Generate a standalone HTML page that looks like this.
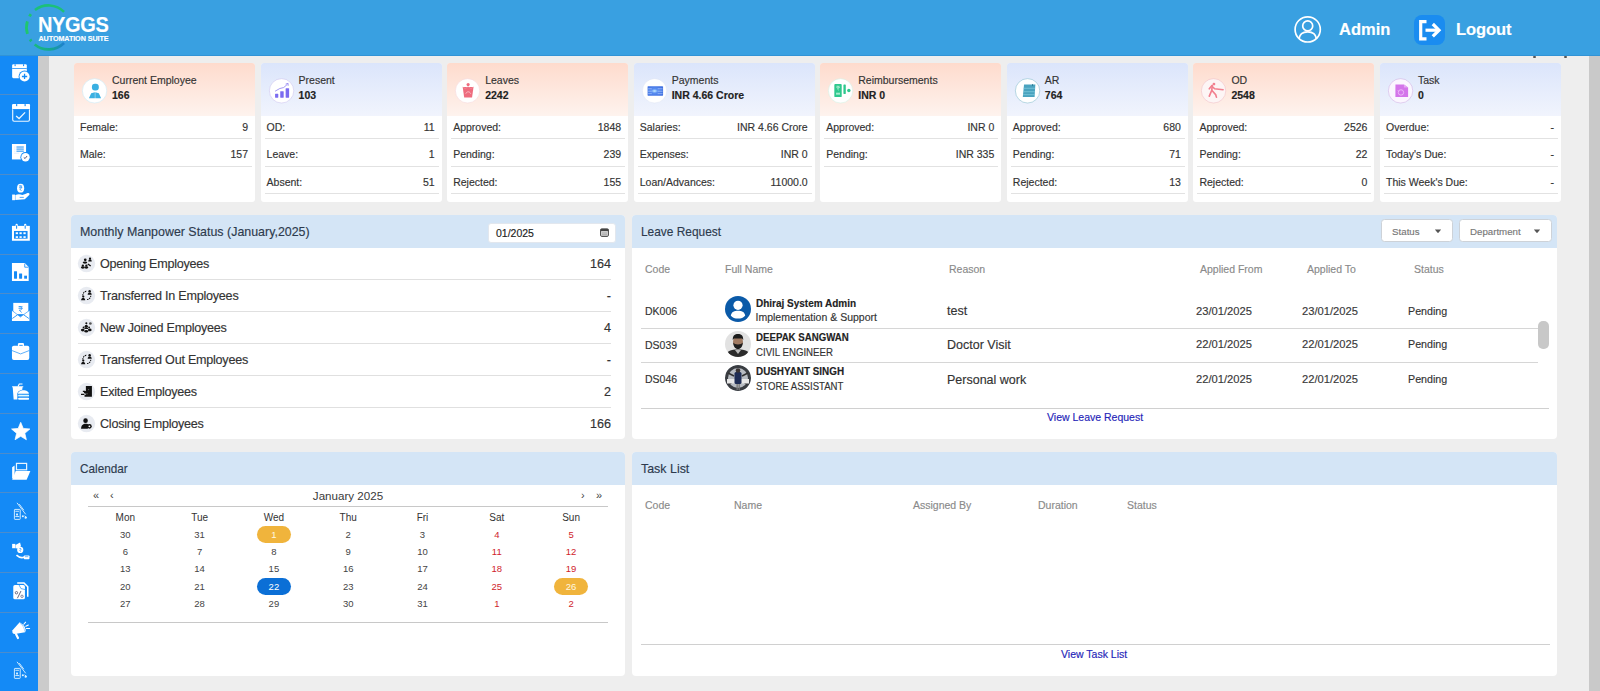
<!DOCTYPE html><html><head><meta charset="utf-8"><style>
*{box-sizing:border-box;margin:0;padding:0}
html,body{width:1600px;height:691px;overflow:hidden}
body{font-family:"Liberation Sans",sans-serif;background:#eeeeee;color:#333;position:relative}
.a{position:absolute;white-space:nowrap}
body{-webkit-text-stroke:0.15px currentColor}
#hdr{left:0;top:0;width:1600px;height:56px;background:#39a0e1;z-index:2;border-bottom:1px solid #3193d6}
#side{left:0;top:55px;width:38px;height:636px;background:#148af6;overflow:hidden}
#strip{left:38px;top:55px;width:11px;height:636px;background:#cbcbcb}
#vscroll{left:1589px;top:55px;width:11px;height:636px;background:#c9c9c9}
.sdiv{position:absolute;left:0;width:38px;height:1px;background:#4b8ccc}
.sic{position:absolute;left:10.5px;width:20px;height:20px}
.card{position:absolute;top:62.8px;width:181px;height:138.9px;background:#fff;border-radius:3px;overflow:hidden}
.card .top{position:absolute;left:0;top:0;width:100%;height:53px}
.peach .top{background:linear-gradient(#fedbcd,#fef3ee)}
.blue .top{background:linear-gradient(#dbe5fb,#f1f4fd)}
.card .ic{position:absolute;left:8px;top:15.3px;width:25px;height:25px;border-radius:50%;background:#fff;border:1px solid #ddd}
.card .ic svg{position:absolute;left:3px;top:3px}
.card .lbl{position:absolute;left:38px;top:11px;font-size:10.5px;color:#333;white-space:nowrap}
.card .val{position:absolute;left:38px;top:26px;font-size:10.5px;font-weight:bold;color:#222;white-space:nowrap}
.card .row{position:absolute;left:4px;width:174px;height:27.5px;border-bottom:1px solid #e2e2e2;font-size:10.5px;color:#333}
.card .row span{position:absolute;top:9.4px;white-space:nowrap}
.card .row .l{left:2px}
.card .row .r{right:4px}
.panel{position:absolute;background:#fff;border-radius:4px;overflow:hidden}
.panel .ph{position:absolute;left:0;top:0;width:100%;height:33px;background:#d4e5f6}
.panel .pt{position:absolute;left:8.8px;top:8.9px;font-size:13.3px;color:#2d3a4d;white-space:nowrap;transform-origin:0 0}
</style></head><body>
<div id="hdr" class="a">
<svg class="a" style="left:0;top:0" width="130" height="56" viewBox="0 0 130 56"><defs><linearGradient id="lg" x1="0" y1="0" x2="1" y2="0"><stop offset="0" stop-color="#19b97e"/><stop offset="0.55" stop-color="#14a88e"/><stop offset="1" stop-color="#1f7fd0"/></linearGradient></defs><path d="M64.06 11.84 A22 22 0 0 0 34.96 10.06" fill="none" stroke="#1cc078" stroke-width="2.6"/><path d="M30.93 14.16 A22 22 0 0 0 29.45 16.40" fill="none" stroke="#1fc66e" stroke-width="2.8"/><path d="M27.35 21.34 A22 22 0 0 0 27.46 33.83" fill="none" stroke="#1fc66e" stroke-width="2.8"/><path d="M31.40 41.25 A22 22 0 0 1 30.05 39.38" fill="none" stroke="#1ab880" stroke-width="2.8"/><path d="M34.65 44.50 A22 22 0 0 0 64.06 42.96" fill="none" stroke="url(#lg)" stroke-width="2.6"/></svg>
<div class="a" style="left:37.7px;top:12.5px;font-size:21.5px;font-weight:bold;color:#fff;letter-spacing:-0.4px;transform:scaleX(0.93);transform-origin:0 0">NYGGS</div>
<div class="a" style="left:38.5px;top:34px;font-size:7.2px;font-weight:bold;color:#fff;letter-spacing:-0.08px">AUTOMATION SUITE</div>
<svg class="a" style="left:1293px;top:15px" width="29" height="29" viewBox="0 0 29 29"><circle cx="14.7" cy="14.4" r="12.6" fill="none" stroke="#fff" stroke-width="1.7"/><circle cx="14.7" cy="10.9" r="5" fill="none" stroke="#fff" stroke-width="1.7"/><path d="M5.8 24 C6.5 19.5 10 16.8 14.7 16.8 C19.4 16.8 22.9 19.5 23.6 24" fill="none" stroke="#fff" stroke-width="1.7"/></svg>
<div class="a" style="left:1339px;top:20px;font-size:16.5px;font-weight:bold;color:#fff">Admin</div>
<div class="a" style="left:1413.5px;top:15px;width:31.5px;height:30px;border-radius:8px;background:#1a8cf0"></div>
<svg class="a" style="left:1413.5px;top:15px" width="32" height="30" viewBox="0 0 32 30"><path d="M12.5 6.7 H6.7 V23.9 H12.5" fill="none" stroke="#fff" stroke-width="3.2"/><path d="M11.5 15.2 H23.5" fill="none" stroke="#fff" stroke-width="3.2"/><path d="M18.8 9 L25 15.2 L18.8 21.4" fill="none" stroke="#fff" stroke-width="3.2" stroke-linejoin="miter"/></svg>
<div class="a" style="left:1456px;top:20px;font-size:16.5px;font-weight:bold;color:#fff;letter-spacing:-0.1px">Logout</div>
</div>
<div id="side" class="a">
<div class="sdiv" style="top:39.3px"></div>
<div class="sdiv" style="top:79.1px"></div>
<div class="sdiv" style="top:118.9px"></div>
<div class="sdiv" style="top:158.7px"></div>
<div class="sdiv" style="top:198.5px"></div>
<div class="sdiv" style="top:238.3px"></div>
<div class="sdiv" style="top:278.1px"></div>
<div class="sdiv" style="top:317.9px"></div>
<div class="sdiv" style="top:357.7px"></div>
<div class="sdiv" style="top:397.5px"></div>
<div class="sdiv" style="top:437.3px"></div>
<div class="sdiv" style="top:477.1px"></div>
<div class="sdiv" style="top:516.9px"></div>
<div class="sdiv" style="top:556.7px"></div>
<div class="sdiv" style="top:596.5px"></div>
<svg class="a" style="left:8px;top:7px" width="26" height="26" viewBox="0 0 691 691"><rect x="110" y="60" width="390" height="370" rx="35" fill="#fff"/><rect x="110" y="160" width="390" height="20" fill="#148af6"/><rect x="175" y="60" width="28" height="50" fill="#148af6"/><rect x="400" y="60" width="28" height="50" fill="#148af6"/><circle cx="440" cy="385" r="158" fill="#148af6"/><circle cx="440" cy="385" r="135" fill="#fff"/><path d="M440 315 V455 M370 385 H510" stroke="#148af6" stroke-width="34"/></svg>
<svg class="a" style="left:8px;top:47px" width="26" height="26" viewBox="0 0 691 691"><rect x="125" y="70" width="445" height="440" rx="35" fill="none" stroke="#eaf6ff" stroke-width="30"/><rect x="110" y="55" width="475" height="135" rx="30" fill="#fff"/><rect x="215" y="55" width="30" height="55" fill="#148af6"/><rect x="440" y="55" width="30" height="55" fill="#148af6"/><rect x="125" y="190" width="445" height="18" fill="#148af6"/><path d="M215 370 L295 440 L455 275" fill="none" stroke="#eaf6ff" stroke-width="34"/></svg>
<svg class="a" style="left:8px;top:86px" width="26" height="26" viewBox="0 0 691 691"><rect x="105" y="80" width="375" height="410" fill="#fff"/><path d="M225 160 H420 M225 215 H420 M225 270 H420" stroke="#148af6" stroke-width="26"/><path d="M160 160 H200 M160 215 H200 M160 270 H200 M160 325 H300" stroke="#cfe8ff" stroke-width="18"/><circle cx="465" cy="430" r="135" fill="#148af6"/><circle cx="465" cy="430" r="112" fill="#fff"/><path d="M420 440 L455 465 L505 400" fill="none" stroke="#557" stroke-width="26"/></svg>
<svg class="a" style="left:8px;top:126px" width="26" height="26" viewBox="0 0 691 691"><ellipse cx="335" cy="190" rx="95" ry="118" fill="#fff"/><path d="M295 130 H375 M295 170 H370 M310 130 C385 130 385 210 310 210 L360 265" fill="none" stroke="#148af6" stroke-width="18"/><rect x="110" y="360" width="75" height="150" fill="#fff"/><path d="M195 370 C260 345 330 345 380 370 L460 345 L520 320 C575 305 590 355 550 385 L445 485 L195 505 Z" fill="#fff"/><path d="M310 435 H420" stroke="#148af6" stroke-width="20"/></svg>
<svg class="a" style="left:8px;top:166px" width="26" height="26" viewBox="0 0 691 691"><rect x="105" y="130" width="475" height="395" fill="#fff"/><rect x="200" y="75" width="60" height="140" rx="30" fill="#fff"/><rect x="428" y="75" width="60" height="140" rx="30" fill="#fff"/><rect x="215" y="115" width="28" height="90" rx="14" fill="#148af6"/><rect x="443" y="115" width="28" height="90" rx="14" fill="#148af6"/><rect x="160" y="265" width="360" height="205" fill="#148af6"/><g fill="#fff"><rect x="205" y="300" width="60" height="50"/><rect x="305" y="300" width="60" height="50"/><rect x="410" y="300" width="60" height="50"/><rect x="205" y="405" width="60" height="45"/><rect x="305" y="405" width="60" height="45"/><rect x="410" y="405" width="60" height="45"/></g></svg>
<svg class="a" style="left:8px;top:206px" width="26" height="26" viewBox="0 0 691 691"><path d="M105 55 H445 L550 160 V530 H105 Z" fill="#fff"/><path d="M445 70 V165 H545" fill="none" stroke="#148af6" stroke-width="22"/><g fill="#148af6"><rect x="160" y="270" width="80" height="200" rx="12"/><rect x="295" y="330" width="80" height="140" rx="12"/><rect x="430" y="390" width="75" height="80"/></g></svg>
<svg class="a" style="left:8px;top:246px" width="26" height="26" viewBox="0 0 691 691"><rect x="140" y="50" width="400" height="300" fill="#fff"/><path d="M280 150 H385 M280 195 H385 M300 150 C395 150 395 245 300 245 L365 305" fill="none" stroke="#148af6" stroke-width="20"/><path d="M105 250 L330 420 L570 250 V530 H105 Z" fill="#fff"/><path d="M105 250 L330 425 L570 250" fill="none" stroke="#148af6" stroke-width="16"/><path d="M115 465 L250 370 M555 465 L420 370" stroke="#148af6" stroke-width="22"/></svg>
<svg class="a" style="left:8px;top:285px" width="26" height="26" viewBox="0 0 691 691"><rect x="265" y="80" width="160" height="120" rx="30" fill="#fff"/><rect x="300" y="130" width="90" height="60" fill="#148af6"/><rect x="105" y="150" width="460" height="380" rx="50" fill="#fff"/><path d="M105 280 L335 370 L565 280" fill="none" stroke="#148af6" stroke-width="18"/></svg>
<svg class="a" style="left:8px;top:325px" width="26" height="26" viewBox="0 0 691 691"><path d="M110 165 H405 V195 H385 L360 520 H150 L125 195 H110 Z" fill="#fff"/><path d="M265 170 L300 105 H385" fill="none" stroke="#fff" stroke-width="30"/><path d="M245 385 C245 215 575 215 575 385 Z" fill="#148af6"/><path d="M265 365 C265 240 555 240 555 365 Z" fill="#fff"/><rect x="250" y="375" width="320" height="90" fill="#148af6"/><rect x="270" y="395" width="290" height="45" rx="15" fill="#dffaff"/><rect x="250" y="450" width="320" height="90" fill="#148af6"/><rect x="270" y="470" width="290" height="55" rx="20" fill="#fff"/></svg>
<svg class="a" style="left:8px;top:365px" width="26" height="26" viewBox="0 0 691 691"><path d="M338,63 L406,225 L581,239 L447,354 L488,524 L338,433 L188,524 L229,354 L95,239 L270,225 Z" fill="#fff" stroke="#fff" stroke-width="20" stroke-linejoin="round"/></svg>
<svg class="a" style="left:8px;top:405px" width="26" height="26" viewBox="0 0 691 691"><rect x="225" y="90" width="270" height="170" fill="none" stroke="#eaf6ff" stroke-width="32"/><path d="M110 195 L175 145 V450 L110 500 Z" fill="#fff"/><path d="M205 290 H595 L495 525 H110 Z" fill="#fff"/></svg>
<svg class="a" style="left:8px;top:445px" width="26" height="26" viewBox="0 0 691 691"><g fill="none" stroke="#dff3ff" stroke-width="24"><rect x="170" y="250" width="155" height="265" rx="15"/><path d="M195 300 H290 M195 440 H300"/><path d="M240 75 L470 380 M300 110 L420 270"/><path d="M440 420 L500 470"/></g><g fill="#dff3ff"><rect x="215" y="360" width="50" height="50"/><circle cx="395" cy="430" r="28"/><circle cx="470" cy="470" r="30"/></g></svg>
<svg class="a" style="left:8px;top:484px" width="26" height="26" viewBox="0 0 691 691"><rect x="110" y="130" width="85" height="115" fill="#fff"/><path d="M200 160 L320 95 L345 190 L255 255 L200 245 Z" fill="#fff"/><circle cx="325" cy="290" r="82" fill="#fff"/><path d="M305 255 H350 M310 255 C360 255 360 305 310 305 L340 340" fill="none" stroke="#148af6" stroke-width="14"/><path d="M225 430 C300 495 380 510 440 475" fill="none" stroke="#fff" stroke-width="45"/><rect x="420" y="440" width="150" height="100" rx="20" fill="#fff"/><path d="M450 470 H540" stroke="#148af6" stroke-width="16"/></svg>
<svg class="a" style="left:8px;top:524px" width="26" height="26" viewBox="0 0 691 691"><path d="M245 105 H425 L525 205 V470" fill="none" stroke="#fff" stroke-width="40"/><rect x="140" y="160" width="310" height="380" rx="45" fill="#fff"/><path d="M295 160 L345 255 L455 280" fill="none" stroke="#148af6" stroke-width="18"/><path d="M250 510 L345 320" stroke="#335" stroke-width="20"/><circle cx="225" cy="365" r="32" fill="none" stroke="#335" stroke-width="18"/><circle cx="372" cy="460" r="32" fill="none" stroke="#557" stroke-width="18"/></svg>
<svg class="a" style="left:8px;top:564px" width="26" height="26" viewBox="0 0 691 691"><path d="M120 300 Q95 395 185 400 L455 355 Q520 215 310 85 Z" fill="#fff"/><path d="M315 110 Q435 190 445 335" fill="none" stroke="#9fd0ff" stroke-width="22"/><path d="M215 405 L265 505" stroke="#fff" stroke-width="58" stroke-linecap="round"/><path d="M420 140 L468 85 M475 195 L540 160 M490 250 L575 250" stroke="#fff" stroke-width="28" stroke-linecap="round"/></svg>
<svg class="a" style="left:8px;top:604px" width="26" height="26" viewBox="0 0 691 691"><g fill="none" stroke="#dff3ff" stroke-width="24"><rect x="170" y="250" width="155" height="265" rx="15"/><path d="M195 300 H290 M195 440 H300"/><path d="M240 75 L470 380 M300 110 L420 270"/><path d="M440 420 L500 470"/></g><g fill="#dff3ff"><rect x="215" y="360" width="50" height="50"/><circle cx="395" cy="430" r="28"/><circle cx="470" cy="470" r="30"/></g></svg>
</div><div id="strip" class="a"></div><div id="vscroll" class="a"></div>
<div class="card peach" style="left:74.00px;width:181px">
<div class="top"></div><svg class="a" style="left:4.00px;top:11.5px" width="36" height="34" viewBox="0 0 732 691"><circle cx="337" cy="342" r="248" fill="#fff" stroke="#d2ecf6" stroke-width="14"/><rect x="283" y="198" width="140" height="135" rx="60" fill="#3ab0e2"/><path d="M222 492 L268 392 L343 372 V492 Z M470 492 L424 392 L351 372 V492 Z" fill="#3ab0e2"/></svg>
<div class="lbl">Current Employee</div><div class="val">166</div>
<div class="row" style="top:48.8px"><span class="l">Female:</span><span class="r">9</span></div>
<div class="row" style="top:76.3px"><span class="l">Male:</span><span class="r">157</span></div>
</div>
<div class="card blue" style="left:260.57px;width:181px">
<div class="top"></div><svg class="a" style="left:4.00px;top:11.5px" width="36" height="34" viewBox="0 0 732 691"><circle cx="337" cy="342" r="248" fill="#fff" stroke="#cdc6f0" stroke-width="12"/><g fill="#7b6cf0"><rect x="205" y="400" width="65" height="82" rx="8"/><rect x="310" y="352" width="70" height="130" rx="8"/><rect x="420" y="290" width="70" height="192" rx="8"/></g><path d="M205 350 L300 295 L380 275 L455 210" fill="none" stroke="#8a7cf0" stroke-width="16"/><path d="M420 205 L470 190 L470 240" fill="none" stroke="#8a7cf0" stroke-width="16"/></svg>
<div class="lbl">Present</div><div class="val">103</div>
<div class="row" style="top:48.8px"><span class="l">OD:</span><span class="r">11</span></div>
<div class="row" style="top:76.3px"><span class="l">Leave:</span><span class="r">1</span></div>
<div class="row" style="top:103.8px"><span class="l">Absent:</span><span class="r">51</span></div>
</div>
<div class="card peach" style="left:447.14px;width:181px">
<div class="top"></div><svg class="a" style="left:4.00px;top:11.5px" width="36" height="34" viewBox="0 0 732 691"><circle cx="337" cy="342" r="248" fill="#fff" stroke="#f6d8dc" stroke-width="12"/><path d="M238 262 L458 262 L428 478 H268 Z" fill="#ee6c7e"/><circle cx="348" cy="215" r="32" fill="#ee6c7e"/><path d="M238 262 L290 300 L348 255 L405 300 L458 262" fill="none" stroke="#f49aa8" stroke-width="10"/><path d="M300 400 C320 350 380 350 400 400" fill="none" stroke="#fbd0d8" stroke-width="16"/></svg>
<div class="lbl">Leaves</div><div class="val">2242</div>
<div class="row" style="top:48.8px"><span class="l">Approved:</span><span class="r">1848</span></div>
<div class="row" style="top:76.3px"><span class="l">Pending:</span><span class="r">239</span></div>
<div class="row" style="top:103.8px"><span class="l">Rejected:</span><span class="r">155</span></div>
</div>
<div class="card blue" style="left:633.71px;width:181px">
<div class="top"></div><svg class="a" style="left:4.00px;top:11.5px" width="36" height="34" viewBox="0 0 732 691"><circle cx="337" cy="342" r="248" fill="#fff" stroke="#dde3f2" stroke-width="10"/><defs><radialGradient id="pg" cx="0.45" cy="0.5" r="0.6"><stop offset="0" stop-color="#c8f0ff"/><stop offset="0.35" stop-color="#5b8ff2"/><stop offset="1" stop-color="#3f6fe0"/></radialGradient></defs><rect x="195" y="248" width="315" height="195" rx="10" fill="url(#pg)"/><path d="M205 300 H280 M205 350 H280 M205 400 H280 M400 300 H500 M400 350 H500 M400 400 H500" stroke="#bcd4ff" stroke-width="12"/></svg>
<div class="lbl">Payments</div><div class="val">INR 4.66 Crore</div>
<div class="row" style="top:48.8px"><span class="l">Salaries:</span><span class="r">INR 4.66 Crore</span></div>
<div class="row" style="top:76.3px"><span class="l">Expenses:</span><span class="r">INR 0</span></div>
<div class="row" style="top:103.8px"><span class="l">Loan/Advances:</span><span class="r">11000.0</span></div>
</div>
<div class="card peach" style="left:820.28px;width:181px">
<div class="top"></div><svg class="a" style="left:4.00px;top:11.5px" width="36" height="34" viewBox="0 0 732 691"><circle cx="337" cy="342" r="248" fill="#fff" stroke="#d4f2e4" stroke-width="12"/><rect x="210" y="205" width="150" height="265" rx="18" fill="#2ec88e"/><path d="M250 250 H320 M250 275 H320 M270 250 C320 250 320 300 270 300 L305 335" fill="none" stroke="#c8f5e0" stroke-width="12"/><rect x="245" y="380" width="80" height="40" fill="#a8ecd0"/><rect x="395" y="215" width="48" height="190" rx="10" fill="#2ec88e"/><circle cx="505" cy="335" r="35" fill="#2ec88e"/></svg>
<div class="lbl">Reimbursements</div><div class="val">INR 0</div>
<div class="row" style="top:48.8px"><span class="l">Approved:</span><span class="r">INR 0</span></div>
<div class="row" style="top:76.3px"><span class="l">Pending:</span><span class="r">INR 335</span></div>
</div>
<div class="card blue" style="left:1006.85px;width:181px">
<div class="top"></div><svg class="a" style="left:4.00px;top:11.5px" width="36" height="34" viewBox="0 0 732 691"><circle cx="337" cy="342" r="248" fill="#fff" stroke="#8cc0cf" stroke-width="12"/><path d="M265 215 H495 L480 470 H240 Z" fill="#4aa3bf"/><path d="M255 290 H490 M250 360 H485 M245 420 H480" stroke="#86cfe0" stroke-width="14"/><rect x="430" y="205" width="18" height="40" fill="#2a7890"/></svg>
<div class="lbl">AR</div><div class="val">764</div>
<div class="row" style="top:48.8px"><span class="l">Approved:</span><span class="r">680</span></div>
<div class="row" style="top:76.3px"><span class="l">Pending:</span><span class="r">71</span></div>
<div class="row" style="top:103.8px"><span class="l">Rejected:</span><span class="r">13</span></div>
</div>
<div class="card peach" style="left:1193.42px;width:181px">
<div class="top"></div><svg class="a" style="left:4.00px;top:11.5px" width="36" height="34" viewBox="0 0 732 691"><circle cx="337" cy="342" r="248" fill="#fdf5f5" stroke="#efb8c0" stroke-width="10"/><g fill="none" stroke="#f2808f" stroke-width="34" stroke-linecap="round"><path d="M310 230 L300 330 L250 450"/><path d="M300 330 L380 420 L395 470"/><path d="M305 250 L360 300 L530 320"/><path d="M300 240 L250 300"/></g><circle cx="345" cy="205" r="28" fill="#f2808f"/></svg>
<div class="lbl">OD</div><div class="val">2548</div>
<div class="row" style="top:48.8px"><span class="l">Approved:</span><span class="r">2526</span></div>
<div class="row" style="top:76.3px"><span class="l">Pending:</span><span class="r">22</span></div>
<div class="row" style="top:103.8px"><span class="l">Rejected:</span><span class="r">0</span></div>
</div>
<div class="card blue" style="left:1379.99px;width:181px">
<div class="top"></div><svg class="a" style="left:4.00px;top:11.5px" width="36" height="34" viewBox="0 0 732 691"><circle cx="337" cy="342" r="248" fill="#fbf6ff" stroke="#c9a6e0" stroke-width="10"/><path d="M232 212 H405 L490 275 V470 H232 Z" fill="#d475ea"/><path d="M405 212 V275 H490" fill="#e6a6f4"/><circle cx="345" cy="375" r="55" fill="none" stroke="#f2c6fb" stroke-width="16"/><path d="M280 330 L300 355" stroke="#f2c6fb" stroke-width="14"/></svg>
<div class="lbl">Task</div><div class="val">0</div>
<div class="row" style="top:48.8px"><span class="l">Overdue:</span><span class="r">-</span></div>
<div class="row" style="top:76.3px"><span class="l">Today's Due:</span><span class="r">-</span></div>
<div class="row" style="top:103.8px"><span class="l">This Week's Due:</span><span class="r">-</span></div>
</div>
<div class="panel" style="left:71px;top:215px;width:554px;height:223.5px"><div class="ph"></div><div class="pt" style="transform:scaleX(0.934)">Monthly Manpower Status (January,2025)</div>
<div class="a" style="left:416.5px;top:7.6px;width:128px;height:20.2px;background:#fff;border-radius:3px;border:1px solid #e2e7ee"></div>
<div class="a" style="left:425px;top:11.8px;font-size:10.5px;color:#222">01/2025</div>
<svg class="a" style="left:529px;top:12.8px" width="9" height="9" viewBox="0 0 9 9"><rect x="0.6" y="0.9" width="7.8" height="7.5" rx="1.2" fill="#ddd" stroke="#444" stroke-width="1"/><rect x="0.6" y="0.9" width="7.8" height="2.2" fill="#444"/><path d="M2 5 H7 M2 6.8 H7" stroke="#777" stroke-width="0.6"/></svg>
<svg class="a" style="left:5px;top:38px" width="22" height="22" viewBox="0 0 691 691" fill="#111"><circle cx="330" cy="330" r="272" fill="#e8ebf1"/><circle cx="290" cy="215" r="42"/><ellipse cx="282" cy="300" rx="72" ry="36"/><circle cx="440" cy="178" r="36"/><path d="M385 265 C390 215 410 205 440 205 C470 205 490 215 495 265 Z"/><circle cx="215" cy="395" r="36"/><ellipse cx="215" cy="455" rx="62" ry="36"/><circle cx="325" cy="395" r="36"/><ellipse cx="325" cy="455" rx="62" ry="36"/><path d="M372 345 L462 408" stroke="#111" stroke-width="44"/></svg>
<div class="a" style="left:29px;top:41.7px;font-size:12.6px;letter-spacing:-0.25px;color:#333">Opening Employees</div>
<div class="a" style="right:14px;top:41.7px;font-size:12.6px;color:#333">164</div>
<div class="a" style="left:7px;top:64px;width:533px;height:1px;background:#e0e0e0"></div>
<svg class="a" style="left:5px;top:70px" width="22" height="22" viewBox="0 0 691 691" fill="#111"><circle cx="330" cy="330" r="272" fill="#e8ebf1"/><path d="M215 330 A135 135 0 0 1 345 190" fill="none" stroke="#111" stroke-width="32" stroke-dasharray="45 22"/><path d="M465 335 A135 135 0 0 1 330 460" fill="none" stroke="#111" stroke-width="32" stroke-dasharray="45 22"/><circle cx="428" cy="195" r="38"/><path d="M365 305 C370 250 395 235 430 235 C465 235 490 250 495 305 Z"/><circle cx="228" cy="365" r="36"/><path d="M160 480 C165 420 190 405 225 405 C260 405 285 420 290 480 Z"/></svg>
<div class="a" style="left:29px;top:73.7px;font-size:12.6px;letter-spacing:-0.25px;color:#333">Transferred In Employees</div>
<div class="a" style="right:14px;top:73.7px;font-size:12.6px;color:#333">-</div>
<div class="a" style="left:7px;top:96px;width:533px;height:1px;background:#e0e0e0"></div>
<svg class="a" style="left:5px;top:102px" width="22" height="22" viewBox="0 0 691 691" fill="#111"><circle cx="330" cy="330" r="272" fill="#e8ebf1"/><circle cx="325" cy="198" r="32"/><circle cx="322" cy="290" r="50"/><path d="M260 380 C265 340 290 330 322 330 C355 330 380 340 385 380 Z"/><circle cx="238" cy="330" r="30"/><circle cx="412" cy="325" r="30"/><ellipse cx="212" cy="412" rx="58" ry="42"/><ellipse cx="322" cy="445" rx="58" ry="38"/><ellipse cx="432" cy="405" rx="58" ry="42"/><circle cx="452" cy="205" r="42" fill="#555"/></svg>
<div class="a" style="left:29px;top:105.7px;font-size:12.6px;letter-spacing:-0.25px;color:#333">New Joined Employees</div>
<div class="a" style="right:14px;top:105.7px;font-size:12.6px;color:#333">4</div>
<div class="a" style="left:7px;top:128px;width:533px;height:1px;background:#e0e0e0"></div>
<svg class="a" style="left:5px;top:134px" width="22" height="22" viewBox="0 0 691 691" fill="#111"><circle cx="330" cy="330" r="272" fill="#e8ebf1"/><path d="M215 330 A135 135 0 0 1 345 190" fill="none" stroke="#111" stroke-width="32" stroke-dasharray="45 22"/><path d="M465 335 A135 135 0 0 1 330 460" fill="none" stroke="#111" stroke-width="32" stroke-dasharray="45 22"/><circle cx="428" cy="195" r="38"/><path d="M365 305 C370 250 395 235 430 235 C465 235 490 250 495 305 Z"/><circle cx="228" cy="365" r="36"/><path d="M160 480 C165 420 190 405 225 405 C260 405 285 420 290 480 Z"/></svg>
<div class="a" style="left:29px;top:137.7px;font-size:12.6px;letter-spacing:-0.25px;color:#333">Transferred Out Employees</div>
<div class="a" style="right:14px;top:137.7px;font-size:12.6px;color:#333">-</div>
<div class="a" style="left:7px;top:160px;width:533px;height:1px;background:#e0e0e0"></div>
<svg class="a" style="left:5px;top:166px" width="22" height="22" viewBox="0 0 691 691" fill="#111"><circle cx="330" cy="330" r="272" fill="#e8ebf1"/><path d="M310 160 H500 V492 H268 V430 H310 Z"/><circle cx="395" cy="270" r="22" fill="#666"/><circle cx="345" cy="400" r="22" fill="#666"/><path d="M158 422 H262 M215 325 H292" stroke="#111" stroke-width="38"/><circle cx="295" cy="355" r="42"/></svg>
<div class="a" style="left:29px;top:169.7px;font-size:12.6px;letter-spacing:-0.25px;color:#333">Exited Employees</div>
<div class="a" style="right:14px;top:169.7px;font-size:12.6px;color:#333">2</div>
<div class="a" style="left:7px;top:192px;width:533px;height:1px;background:#e0e0e0"></div>
<svg class="a" style="left:5px;top:198px" width="22" height="22" viewBox="0 0 691 691" fill="#111"><circle cx="330" cy="330" r="272" fill="#e8ebf1"/><circle cx="300" cy="240" r="72"/><path d="M160 492 C160 380 225 335 300 335 C350 335 385 350 395 372 L372 492 Z"/><circle cx="422" cy="420" r="72"/><circle cx="422" cy="420" r="30" fill="#fff"/></svg>
<div class="a" style="left:29px;top:201.7px;font-size:12.6px;letter-spacing:-0.25px;color:#333">Closing Employees</div>
<div class="a" style="right:14px;top:201.7px;font-size:12.6px;color:#333">166</div>
</div>
<div class="panel" style="left:632px;top:215px;width:925px;height:223.5px"><div class="ph"></div><div class="pt" style="transform:scaleX(0.895)">Leave Request</div>
<div class="a" style="left:748.6px;top:4.25px;width:72.5px;height:23px;background:#fff;border:1px solid #cdd2d8;border-radius:3.5px"></div>
<div class="a" style="left:760.1px;top:11px;font-size:9.7px;color:#777">Status</div>
<svg class="a" style="left:801.6px;top:14.2px" width="8" height="5" viewBox="0 0 8 5"><path d="M0.8 0.5 H7.2 L4 4.2 Z" fill="#555"/></svg>
<div class="a" style="left:826.5px;top:4.25px;width:93.75px;height:23px;background:#fff;border:1px solid #cdd2d8;border-radius:3.5px"></div>
<div class="a" style="left:838.0px;top:11px;font-size:9.7px;color:#777">Department</div>
<svg class="a" style="left:900.75px;top:14.2px" width="8" height="5" viewBox="0 0 8 5"><path d="M0.8 0.5 H7.2 L4 4.2 Z" fill="#555"/></svg>
<div class="a" style="left:13px;top:48px;font-size:10.5px;color:#8a8a8a">Code</div>
<div class="a" style="left:93px;top:48px;font-size:10.5px;color:#8a8a8a">Full Name</div>
<div class="a" style="left:317px;top:48px;font-size:10.5px;color:#8a8a8a">Reason</div>
<div class="a" style="left:568px;top:48px;font-size:10.5px;color:#8a8a8a">Applied From</div>
<div class="a" style="left:675px;top:48px;font-size:10.5px;color:#8a8a8a">Applied To</div>
<div class="a" style="left:782px;top:48px;font-size:10.5px;color:#8a8a8a">Status</div>
<div class="a" style="left:13px;top:89.90px;font-size:10.5px;color:#333">DK006</div>
<svg class="a" style="left:92.5px;top:81px" width="26" height="26" viewBox="0 0 26 26"><circle cx="13" cy="13" r="13" fill="#0b5aa8"/><circle cx="13" cy="9.3" r="4.6" fill="#fff"/><path d="M5.8 19.5 C6.5 15.8 9.5 14.8 13 14.8 C16.5 14.8 19.5 15.8 20.2 19.5 C18.5 21.8 16 22.6 13 22.6 C10 22.6 7.5 21.8 5.8 19.5 Z" fill="#fff"/></svg>
<div class="a" style="left:123.5px;top:83.3px;font-size:10.2px;font-weight:bold;color:#222;transform:scaleX(0.98);transform-origin:0 0">Dhiraj System Admin</div>
<div class="a" style="left:123.5px;top:96.3px;font-size:10.5px;color:#333;transform:scaleX(1.0);transform-origin:0 0">Implementation &amp; Support</div>
<div class="a" style="left:315px;top:89.00px;font-size:12.5px;color:#333">test</div>
<div class="a" style="left:564px;top:89.70px;font-size:11.2px;color:#3a3a3a">23/01/2025</div>
<div class="a" style="left:670px;top:89.70px;font-size:11.2px;color:#3a3a3a">23/01/2025</div>
<div class="a" style="left:776px;top:89.70px;font-size:10.7px;color:#333">Pending</div>
<div class="a" style="left:13px;top:123.60px;font-size:10.5px;color:#333">DS039</div>
<svg class="a" style="left:92.5px;top:116px" width="26" height="26" viewBox="0 0 26 26"><defs><clipPath id="c1"><circle cx="13" cy="13" r="13"/></clipPath></defs><g clip-path="url(#c1)"><rect width="26" height="26" fill="#e2e2e2"/><path d="M0 26 C1 20 6 18.5 13 18.5 C20 18.5 25 20 26 26 Z" fill="#2c2c2c"/><path d="M10 19 L13 23 L16 19 Z" fill="#bbb"/><ellipse cx="13" cy="11" rx="5" ry="6" fill="#a07a62"/><path d="M7.8 9 C7.5 4.5 10 3 13 3 C16 3 18.5 4.5 18.2 9 L17 7.5 H9 Z" fill="#1c1c1c"/><path d="M8.2 11.5 C8.5 16.5 11 18 13 18 C15 18 17.5 16.5 17.8 11.5 C16.5 14 9.5 14 8.2 11.5 Z" fill="#1e1e1e"/></g></svg>
<div class="a" style="left:123.5px;top:117.1px;font-size:10.2px;font-weight:bold;color:#222;transform:scaleX(0.95);transform-origin:0 0">DEEPAK SANGWAN</div>
<div class="a" style="left:123.5px;top:131.3px;font-size:10.5px;color:#333;transform:scaleX(0.92);transform-origin:0 0">CIVIL ENGINEER</div>
<div class="a" style="left:315px;top:122.50px;font-size:12.5px;color:#333">Doctor Visit</div>
<div class="a" style="left:564px;top:123.40px;font-size:11.2px;color:#3a3a3a">22/01/2025</div>
<div class="a" style="left:670px;top:123.40px;font-size:11.2px;color:#3a3a3a">22/01/2025</div>
<div class="a" style="left:776px;top:123.40px;font-size:10.7px;color:#333">Pending</div>
<div class="a" style="left:13px;top:157.80px;font-size:10.5px;color:#333">DS046</div>
<svg class="a" style="left:92.5px;top:149.6px" width="26" height="26" viewBox="0 0 26 26"><defs><clipPath id="c2"><circle cx="13" cy="13" r="13"/></clipPath></defs><g clip-path="url(#c2)"><rect width="26" height="26" fill="#b8bcc2"/><circle cx="13" cy="13" r="11.5" fill="none" stroke="#3a3d42" stroke-width="3"/><path d="M3 8 L9 11 M23 8 L17 11 M4 19 L9 16 M22 19 L17 16" stroke="#333" stroke-width="1.6"/><rect x="2" y="14" width="22" height="4.5" fill="#e8e8e8"/><rect x="9.5" y="7" width="7" height="12" rx="1.5" fill="#1f2d55"/><circle cx="13" cy="5.5" r="2.3" fill="#3a3333"/><rect x="11.5" y="19" width="1.3" height="6" fill="#777"/><rect x="13.5" y="19" width="1.3" height="6" fill="#777"/></g></svg>
<div class="a" style="left:123.5px;top:151.0px;font-size:10.2px;font-weight:bold;color:#222;transform:scaleX(0.97);transform-origin:0 0">DUSHYANT SINGH</div>
<div class="a" style="left:123.5px;top:164.9px;font-size:10.5px;color:#333;transform:scaleX(0.91);transform-origin:0 0">STORE ASSISTANT</div>
<div class="a" style="left:315px;top:157.80px;font-size:12.5px;color:#333">Personal work</div>
<div class="a" style="left:564px;top:157.60px;font-size:11.2px;color:#3a3a3a">22/01/2025</div>
<div class="a" style="left:670px;top:157.60px;font-size:11.2px;color:#3a3a3a">22/01/2025</div>
<div class="a" style="left:776px;top:157.60px;font-size:10.7px;color:#333">Pending</div>
<div class="a" style="left:9px;top:113px;width:897px;height:1px;background:#d6d6d6"></div>
<div class="a" style="left:9px;top:147px;width:897px;height:1px;background:#d6d6d6"></div>
<div class="a" style="left:9px;top:192.5px;width:908px;height:1px;background:#d0d0d0"></div>
<div class="a" style="left:906px;top:106px;width:10.5px;height:28px;border-radius:5px;background:#c8c8c8"></div>
<div class="a" style="left:415px;top:196px;font-size:10.5px;color:#2525b8">View Leave Request</div>
</div>
<div class="panel" style="left:71px;top:452px;width:554px;height:223.5px"><div class="ph"></div><div class="pt" style="transform:scaleX(0.884)">Calendar</div><div style="-webkit-text-stroke:0">
<div class="a" style="left:22px;top:37px;font-size:11px;color:#444">&laquo;</div>
<div class="a" style="left:39px;top:37px;font-size:11px;color:#444">&lsaquo;</div>
<div class="a" style="left:0;width:554px;top:36.5px;text-align:center;font-size:11.6px;color:#3a3a3a"><span style="position:relative;left:0px">January 2025</span></div>
<div class="a" style="left:510px;top:37px;font-size:11px;color:#444">&rsaquo;</div>
<div class="a" style="left:525px;top:37px;font-size:11px;color:#444">&raquo;</div>
<div class="a" style="left:17px;top:53.5px;width:520px;height:1px;background:#c8c8c8"></div>
<div class="a" style="left:17px;top:169.5px;width:520px;height:1px;background:#c8c8c8"></div>
<div class="a" style="left:24.299999999999997px;width:60px;text-align:center;top:60px;font-size:10px;color:#333">Mon</div>
<div class="a" style="left:98.6px;width:60px;text-align:center;top:60px;font-size:10px;color:#333">Tue</div>
<div class="a" style="left:172.89999999999998px;width:60px;text-align:center;top:60px;font-size:10px;color:#333">Wed</div>
<div class="a" style="left:247.2px;width:60px;text-align:center;top:60px;font-size:10px;color:#333">Thu</div>
<div class="a" style="left:321.5px;width:60px;text-align:center;top:60px;font-size:10px;color:#333">Fri</div>
<div class="a" style="left:395.8px;width:60px;text-align:center;top:60px;font-size:10px;color:#333">Sat</div>
<div class="a" style="left:470.09999999999997px;width:60px;text-align:center;top:60px;font-size:10px;color:#333">Sun</div>
<div class="a" style="left:34.3px;width:40px;text-align:center;top:76.5px;font-size:9.5px;color:#444">30</div>
<div class="a" style="left:108.6px;width:40px;text-align:center;top:76.5px;font-size:9.5px;color:#444">31</div>
<div class="a" style="left:185.89999999999998px;top:73.5px;width:34px;height:17.5px;border-radius:9px;background:#f0b43c"></div>
<div class="a" style="left:182.89999999999998px;width:40px;text-align:center;top:76.5px;font-size:9.5px;color:#fff8e0">1</div>
<div class="a" style="left:257.2px;width:40px;text-align:center;top:76.5px;font-size:9.5px;color:#444">2</div>
<div class="a" style="left:331.5px;width:40px;text-align:center;top:76.5px;font-size:9.5px;color:#444">3</div>
<div class="a" style="left:405.8px;width:40px;text-align:center;top:76.5px;font-size:9.5px;color:#d0242c">4</div>
<div class="a" style="left:480.09999999999997px;width:40px;text-align:center;top:76.5px;font-size:9.5px;color:#d0242c">5</div>
<div class="a" style="left:34.3px;width:40px;text-align:center;top:93.9px;font-size:9.5px;color:#444">6</div>
<div class="a" style="left:108.6px;width:40px;text-align:center;top:93.9px;font-size:9.5px;color:#444">7</div>
<div class="a" style="left:182.89999999999998px;width:40px;text-align:center;top:93.9px;font-size:9.5px;color:#444">8</div>
<div class="a" style="left:257.2px;width:40px;text-align:center;top:93.9px;font-size:9.5px;color:#444">9</div>
<div class="a" style="left:331.5px;width:40px;text-align:center;top:93.9px;font-size:9.5px;color:#444">10</div>
<div class="a" style="left:405.8px;width:40px;text-align:center;top:93.9px;font-size:9.5px;color:#d0242c">11</div>
<div class="a" style="left:480.09999999999997px;width:40px;text-align:center;top:93.9px;font-size:9.5px;color:#d0242c">12</div>
<div class="a" style="left:34.3px;width:40px;text-align:center;top:111.3px;font-size:9.5px;color:#444">13</div>
<div class="a" style="left:108.6px;width:40px;text-align:center;top:111.3px;font-size:9.5px;color:#444">14</div>
<div class="a" style="left:182.89999999999998px;width:40px;text-align:center;top:111.3px;font-size:9.5px;color:#444">15</div>
<div class="a" style="left:257.2px;width:40px;text-align:center;top:111.3px;font-size:9.5px;color:#444">16</div>
<div class="a" style="left:331.5px;width:40px;text-align:center;top:111.3px;font-size:9.5px;color:#444">17</div>
<div class="a" style="left:405.8px;width:40px;text-align:center;top:111.3px;font-size:9.5px;color:#d0242c">18</div>
<div class="a" style="left:480.09999999999997px;width:40px;text-align:center;top:111.3px;font-size:9.5px;color:#d0242c">19</div>
<div class="a" style="left:34.3px;width:40px;text-align:center;top:128.7px;font-size:9.5px;color:#444">20</div>
<div class="a" style="left:108.6px;width:40px;text-align:center;top:128.7px;font-size:9.5px;color:#444">21</div>
<div class="a" style="left:185.89999999999998px;top:125.69999999999999px;width:34px;height:17.5px;border-radius:9px;background:#0b6fd6"></div>
<div class="a" style="left:182.89999999999998px;width:40px;text-align:center;top:128.7px;font-size:9.5px;color:#fff">22</div>
<div class="a" style="left:257.2px;width:40px;text-align:center;top:128.7px;font-size:9.5px;color:#444">23</div>
<div class="a" style="left:331.5px;width:40px;text-align:center;top:128.7px;font-size:9.5px;color:#444">24</div>
<div class="a" style="left:405.8px;width:40px;text-align:center;top:128.7px;font-size:9.5px;color:#d0242c">25</div>
<div class="a" style="left:483.09999999999997px;top:125.69999999999999px;width:34px;height:17.5px;border-radius:9px;background:#f0b43c"></div>
<div class="a" style="left:480.09999999999997px;width:40px;text-align:center;top:128.7px;font-size:9.5px;color:#fff8e0">26</div>
<div class="a" style="left:34.3px;width:40px;text-align:center;top:146.1px;font-size:9.5px;color:#444">27</div>
<div class="a" style="left:108.6px;width:40px;text-align:center;top:146.1px;font-size:9.5px;color:#444">28</div>
<div class="a" style="left:182.89999999999998px;width:40px;text-align:center;top:146.1px;font-size:9.5px;color:#444">29</div>
<div class="a" style="left:257.2px;width:40px;text-align:center;top:146.1px;font-size:9.5px;color:#444">30</div>
<div class="a" style="left:331.5px;width:40px;text-align:center;top:146.1px;font-size:9.5px;color:#444">31</div>
<div class="a" style="left:405.8px;width:40px;text-align:center;top:146.1px;font-size:9.5px;color:#d0242c">1</div>
<div class="a" style="left:480.09999999999997px;width:40px;text-align:center;top:146.1px;font-size:9.5px;color:#d0242c">2</div>
</div></div>
<div class="panel" style="left:632px;top:452px;width:925px;height:223.5px"><div class="ph"></div><div class="pt" style="transform:scaleX(0.934)">Task List</div>
<div class="a" style="left:13px;top:47.3px;font-size:10.5px;color:#8a8a8a">Code</div>
<div class="a" style="left:102px;top:47.3px;font-size:10.5px;color:#8a8a8a">Name</div>
<div class="a" style="left:281px;top:47.3px;font-size:10.5px;color:#8a8a8a">Assigned By</div>
<div class="a" style="left:406px;top:47.3px;font-size:10.5px;color:#8a8a8a">Duration</div>
<div class="a" style="left:495px;top:47.3px;font-size:10.5px;color:#8a8a8a">Status</div>
<div class="a" style="left:9px;top:192px;width:909px;height:1px;background:#d0d0d0"></div>
<div class="a" style="left:429px;top:195.5px;font-size:10.5px;color:#2525b8">View Task List</div>
</div>
<div class="a" style="left:1533px;top:56px;width:3px;height:1.6px;background:#555;border-radius:1px;z-index:3"></div><div class="a" style="left:1564px;top:56px;width:3px;height:1.6px;background:#555;border-radius:1px;z-index:3"></div>
</body></html>
